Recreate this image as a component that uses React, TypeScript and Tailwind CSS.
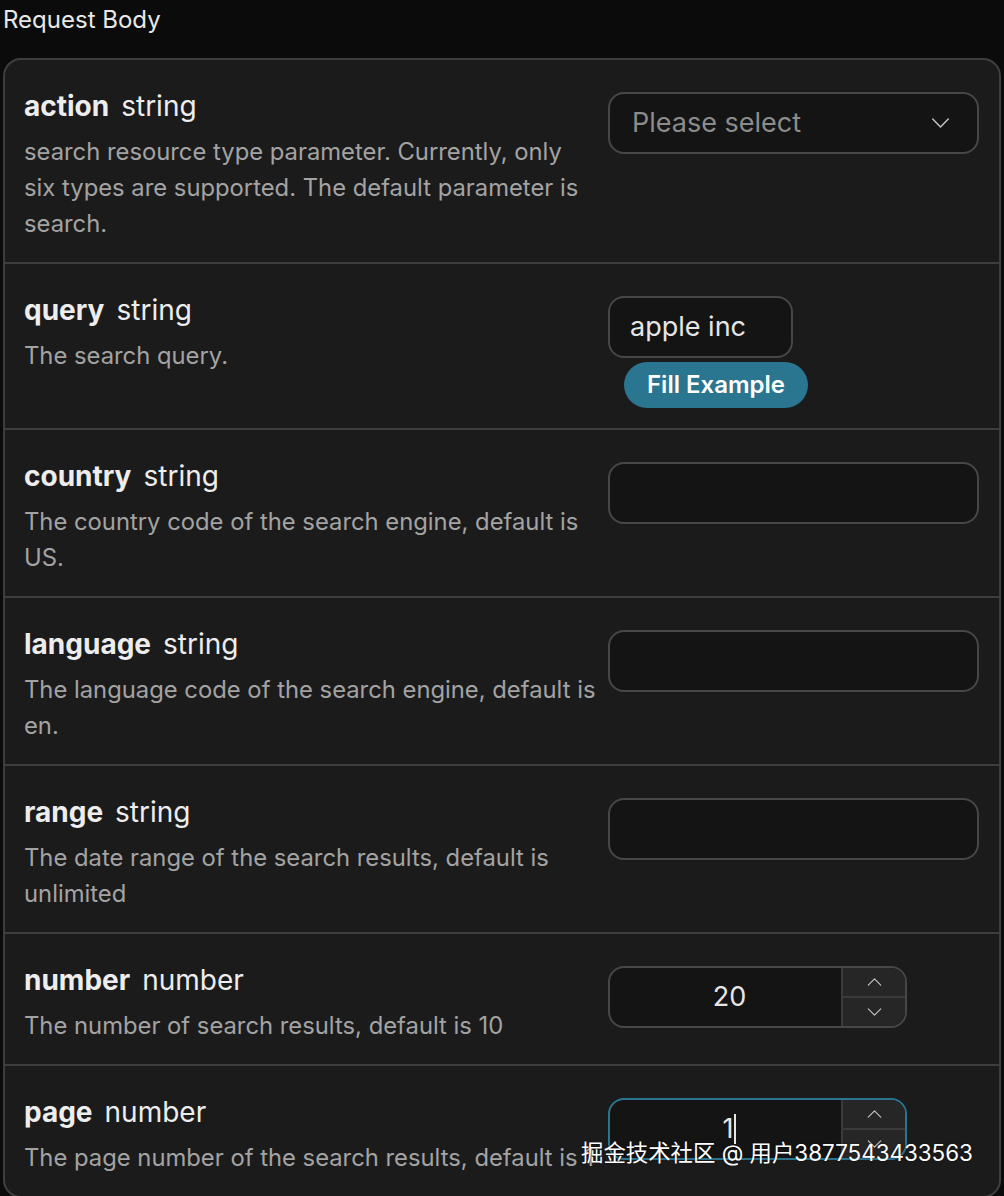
import React from "react";

type Field = {
  name: string;
  type: string;
  desc: string;
  kind: "select" | "text" | "number" | "query" | "page";
};

const fields: Field[] = [
  { name: "action", type: "string", desc: "search resource type parameter. Currently, only six types are supported. The default parameter is search.", kind: "select" },
  { name: "query", type: "string", desc: "The search query.", kind: "query" },
  { name: "country", type: "string", desc: "The country code of the search engine, default is US.", kind: "text" },
  { name: "language", type: "string", desc: "The language code of the search engine, default is en.", kind: "text" },
  { name: "range", type: "string", desc: "The date range of the search results, default is unlimited", kind: "text" },
  { name: "number", type: "number", desc: "The number of search results, default is 10", kind: "number" },
  { name: "page", type: "number", desc: "The page number of the search results, default is 1", kind: "page" },
];

function Chevron({ up, w = 16 }: { up?: boolean; w?: number }) {
  const h = Math.round(w * 0.55);
  return (
    <svg width={w} height={h} viewBox="0 0 16 9" fill="none" stroke="#c4c4c4" strokeWidth="1.3" strokeLinecap="round" strokeLinejoin="round">
      {up ? <path d="M1 8 L8 1 L15 8" /> : <path d="M1 1 L8 8 L15 1" />}
    </svg>
  );
}

function NumberBox({ value, active }: { value: string; active?: boolean }) {
  return (
    <div className={`flex h-[62px] w-[299px] overflow-hidden rounded-[16px] border-2 bg-[#141414] ${active ? "border-[#2a7590]" : "border-[#474747]"}`}>
      <div className="flex flex-1 items-center justify-center pl-[8px] text-[27px] text-[#e6e6e6]">
        <span>{value}</span>
        {active && <span className="ml-[1px] inline-block h-[30px] w-[2px] bg-[#e6e6e6]" />}
      </div>
      <div className="flex w-[64px] flex-col border-l-2 border-[#3a3a3a] bg-[#262626]">
        <div className="flex flex-1 items-center justify-center border-b-2 border-[#3a3a3a]">
          <Chevron up w={15} />
        </div>
        <div className="flex flex-1 items-center justify-center">
          <Chevron w={15} />
        </div>
      </div>
    </div>
  );
}

function Control({ kind }: { kind: Field["kind"] }) {
  if (kind === "select") {
    return (
      <div className="flex h-[62px] w-[371px] items-center justify-between rounded-[16px] border-2 border-[#474747] bg-[#141414] pl-[22px] pr-[27px]">
        <span className="text-[27px] text-[#8c8c8c]">Please select</span>
        <Chevron w={19} />
      </div>
    );
  }
  if (kind === "query") {
    return (
      <div className="flex flex-col items-start">
        <div className="flex h-[62px] w-[185px] items-center rounded-[16px] border-2 border-[#474747] bg-[#141414] pl-[20px] text-[27px] text-[#e6e6e6]">
          apple inc
        </div>
        <button className="ml-[16px] mt-[4px] flex h-[46px] w-[184px] items-center justify-center rounded-full bg-[#2a7590] text-[24px] font-semibold text-white">
          Fill Example
        </button>
      </div>
    );
  }
  if (kind === "number") return <NumberBox value="20" />;
  if (kind === "page") return <NumberBox value="1" active />;
  return <div className="h-[62px] w-[371px] rounded-[16px] border-2 border-[#474747] bg-[#141414]" />;
}

export default function App() {
  return (
    <div className="min-h-[1196px] w-[1004px] bg-[#0b0b0b] pl-[3px] pr-[3px] pt-[3px]" style={{ fontFamily: "Inter, 'Noto Sans', 'Noto Sans CJK SC', sans-serif" }}>
      <div className="h-[34px] text-[24px] leading-[34px] text-[#e8e8e8]">Request Body</div>
      <div className="relative mt-[21px] h-[1140px] overflow-hidden rounded-[18px] border-2 border-[#3e3e3e] bg-[#1b1b1c]">
        {fields.map((f, i) => (
          <div key={f.name} className={`flex pb-[20px] pl-[19px] pr-[20px] pt-[28px] ${i > 0 ? "border-t-2 border-[#3e3e3e]" : ""}`}>
            <div className="flex-1 pr-[11px]">
              <div className="flex h-[36px] items-center gap-[12px] text-[28px] text-[#ededed]">
                <span className="font-bold">{f.name}</span>
                <span>{f.type}</span>
              </div>
              <p className="mt-[10px] text-[23.8px] leading-[36px] text-[#a3a3a3]">{f.desc}</p>
            </div>
            <div className="mt-[4px] w-[371px]">
              <Control kind={f.kind} />
            </div>
          </div>
        ))}
      </div>
      <div className="pointer-events-none absolute left-[581px] top-[1136px] text-[22.4px] text-white" style={{ textShadow: "0 0 2px rgba(0,0,0,0.6)" }}>
        掘金技术社区 @ 用户3877543433563
      </div>
    </div>
  );
}
